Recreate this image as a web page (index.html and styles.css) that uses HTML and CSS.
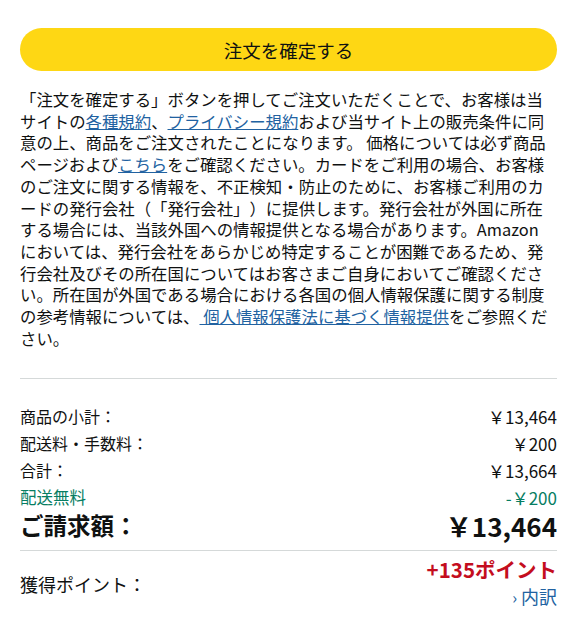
FILE: index.html
```html
<!DOCTYPE html>
<html lang="ja">
<head>
    <meta charset="UTF-8">
    <meta name="viewport" content="width=device-width, initial-scale=1.0">
    <title>注文の確定</title>
    <link rel="stylesheet" href="styles.css">
</head>
<body>
    <div class="checkout">
        <button class="place-order-btn">注文を確定する</button>

        <p class="legal-text">「注文を確定する」ボタンを押してご注文いただくことで、お客様は当サイトの<a href="#">各種規約</a>、<a href="#">プライバシー規約</a>および当サイト上の販売条件に同意の上、商品をご注文されたことになります。 価格については必ず商品ページおよび<a href="#">こちら</a>をご確認ください。カードをご利用の場合、お客様のご注文に関する情報を、不正検知・防止のために、お客様ご利用のカードの発行会社（「発行会社」）に提供します。発行会社が外国に所在する場合には、当該外国への情報提供となる場合があります。Amazonにおいては、発行会社をあらかじめ特定することが困難であるため、発行会社及びその所在国についてはお客さまご自身においてご確認ください。所在国が外国である場合における各国の個人情報保護に関する制度の参考情報については、<a href="#"> 個人情報保護法に基づく情報提供</a>をご参照ください。</p>

        <div class="divider"></div>

        <div class="summary">
            <div class="summary-row">
                <span>商品の小計：</span>
                <span class="amount">￥13,464</span>
            </div>
            <div class="summary-row">
                <span>配送料・手数料：</span>
                <span class="amount">￥200</span>
            </div>
            <div class="summary-row">
                <span>合計：</span>
                <span class="amount">￥13,664</span>
            </div>
            <div class="summary-row free-shipping">
                <span>配送無料</span>
                <span class="amount">-￥200</span>
            </div>
            <div class="summary-row grand-total">
                <span>ご請求額：</span>
                <span class="grand-value">￥13,464</span>
            </div>
        </div>

        <div class="divider thin"></div>

        <div class="points-row">
            <span class="points-label">獲得ポイント：</span>
            <div class="points-detail">
                <div class="points-value">+135ポイント</div>
                <a href="#" class="breakdown-link"><span class="chevron">›</span>内訳</a>
            </div>
        </div>
    </div>
</body>
</html>
```

FILE: styles.css
```css
* {
    margin: 0;
    padding: 0;
    box-sizing: border-box;
}

body {
    font-family: "Noto Sans CJK JP", "Noto Sans", sans-serif;
    color: #0f1111;
    background: #fff;
    text-spacing-trim: space-all;
}

.checkout {
    width: 571px;
    padding: 28px 14px 0 20px;
}

.place-order-btn {
    display: block;
    width: 100%;
    height: 43px;
    background: #fed714;
    border: none;
    border-radius: 22px;
    font-family: inherit;
    font-size: 18.5px;
    color: #0f1111;
    cursor: pointer;
}

.legal-text {
    margin-top: 18px;
    padding-right: 6px;
    font-size: 16.4px;
    line-height: 21.7px;
}

.legal-text a {
    color: #2162a1;
    text-decoration: underline;
}

.divider {
    height: 1px;
    background: #d5d9d9;
    margin-top: 29px;
}

.summary {
    margin-top: 24px;
}

.summary-row {
    display: flex;
    justify-content: space-between;
    align-items: center;
    font-size: 16px;
    line-height: 27px;
}

.amount {
    font-size: 17px;
}

.free-shipping {
    font-size: 16.5px;
    color: #067d62;
}

.grand-total {
    font-size: 23.5px;
    font-weight: 700;
    line-height: 29px;
}

.grand-value {
    font-size: 26px;
}

.divider.thin {
    margin-top: 10px;
}

.points-row {
    display: flex;
    justify-content: space-between;
    align-items: center;
    margin-top: 5px;
}

.points-label {
    font-size: 18px;
}

.points-detail {
    text-align: right;
}

.points-value {
    font-size: 20.5px;
    font-weight: 700;
    color: #c40d1e;
    line-height: 26px;
}

.breakdown-link {
    display: inline-block;
    font-size: 18px;
    line-height: 28px;
    color: #2162a1;
    text-decoration: none;
}

.chevron {
    font-size: 16px;
    margin-right: 4px;
}
```
